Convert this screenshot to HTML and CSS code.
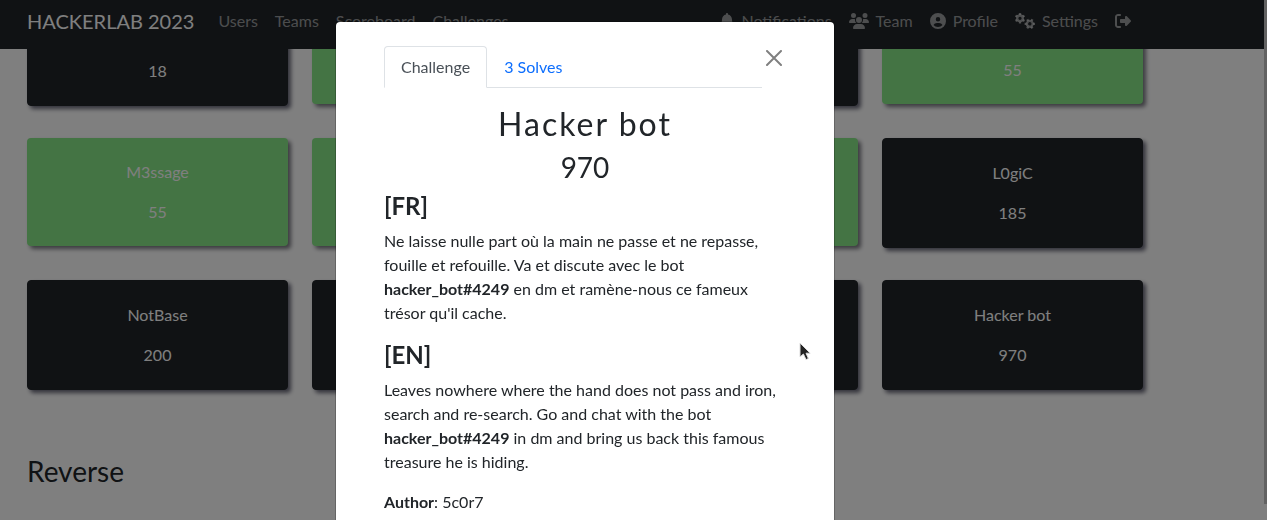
FILE: index.html
```html
<!DOCTYPE html>
<html lang="en">
<head>
<meta charset="utf-8">
<title>HACKERLAB 2023</title>
<link rel="stylesheet" href="styles.css">
</head>
<body>
<header class="navbar">
  <div class="container navbar-inner">
    <a class="brand" href="#">HACKERLAB 2023</a>
    <nav class="nav-links">
      <a href="#">Users</a>
      <a href="#">Teams</a>
      <a href="#">Scoreboard</a>
      <a href="#">Challenges</a>
    </nav>
    <nav class="nav-links nav-account">
      <a href="#"><svg class="icon" width="14" height="16" viewBox="0 0 448 512"><path d="M224 0c-17.7 0-32 14.3-32 32V51.2C119 66 64 130.6 64 208v18.8c0 47-17.3 92.4-48.5 127.6l-7.4 8.3c-8.4 9.4-10.4 22.9-5.3 34.4S19.4 416 32 416H416c12.6 0 24-7.4 29.2-18.9s3.1-25-5.3-34.4l-7.4-8.3C401.3 319.2 384 273.9 384 226.8V208c0-77.4-55-142-128-156.8V32c0-17.7-14.3-32-32-32zM160 448a64 64 0 0 0 128 0z"/></svg>Notifications</a>
      <a href="#"><svg class="icon" width="20" height="16" viewBox="0 0 640 512"><path d="M144 0a80 80 0 1 1 0 160A80 80 0 1 1 144 0zM512 0a80 80 0 1 1 0 160A80 80 0 1 1 512 0zM0 298.7C0 239.8 47.8 192 106.7 192h42.7c15.9 0 31 3.5 44.6 9.7c-1.3 7.2-1.9 14.7-1.9 22.3c0 38.2 16.8 72.5 43.3 96H21.3C9.6 320 0 310.4 0 298.7zM405.3 320c26.6-23.5 43.3-57.8 43.3-96c0-7.6-.7-15-1.9-22.3c13.6-6.3 28.7-9.7 44.6-9.7h42.7C592.2 192 640 239.8 640 298.7c0 11.8-9.6 21.3-21.3 21.3H405.3zM224 224a96 96 0 1 1 192 0 96 96 0 1 1 -192 0zM128 485.3C128 411.7 187.7 352 261.3 352H378.7C452.3 352 512 411.7 512 485.3c0 14.7-11.9 26.7-26.7 26.7H154.7c-14.7 0-26.7-11.9-26.7-26.7z"/></svg>Team</a>
      <a href="#"><svg class="icon" width="16" height="16" viewBox="0 0 512 512"><path fill-rule="evenodd" d="M399 384.2C376.9 345.8 335.4 320 288 320H224c-47.4 0-88.9 25.8-111 64.2c35.2 39.2 86.2 63.8 143 63.8s107.8-24.7 143-63.8zM0 256a256 256 0 1 1 512 0A256 256 0 1 1 0 256zm256 16a72 72 0 1 0 0-144 72 72 0 1 0 0 144z"/></svg>Profile</a>
      <a href="#"><svg class="icon" width="20" height="16" viewBox="0 0 20 16"><defs><g id="gear" fill="none" stroke="currentColor"><circle r="2.8" stroke-width="2.3"/><path stroke-width="2.3" d="M0-3.4V-5.2M0 3.4V5.2M2.9-1.7L4.5-2.6M-2.9 1.7L-4.5 2.6M2.9 1.7L4.5 2.6M-2.9-1.7L-4.5-2.6"/></g></defs><use href="#gear" x="5" y="5.3"/><use href="#gear" transform="translate(14.8 10.8) rotate(30)"/></svg>Settings</a>
      <a href="#" aria-label="Log out"><svg class="icon" width="16" height="16" viewBox="0 0 512 512"><path d="M377.9 105.9L500.7 228.7c7.2 7.2 11.3 17.1 11.3 27.3s-4.1 20.1-11.3 27.3L377.9 406.1c-6.4 6.4-15 9.9-24 9.9c-18.7 0-33.9-15.2-33.9-33.9l0-62.1-128 0c-17.7 0-32-14.3-32-32l0-64c0-17.7 14.3-32 32-32l128 0 0-62.1c0-18.7 15.2-33.9 33.9-33.9c9 0 17.6 3.6 24 9.9zM160 96L96 96c-17.7 0-32 14.3-32 32l0 256c0 17.7 14.3 32 32 32l64 0c17.7 0 32 14.3 32 32s-14.3 32-32 32l-64 0c-53 0-96-43-96-96L0 128C0 75 43 32 96 32l64 0c17.7 0 32 14.3 32 32s-14.3 32-32 32z"/></svg></a>
    </nav>
  </div>
</header>

<main class="container board">
  <div class="cards">
    <button class="card"><span>18</span></button>
    <button class="card solved"></button>
    <button class="card"></button>
    <button class="card solved"><span>55</span></button>

    <button class="card solved"><span>M3ssage</span><span>55</span></button>
    <button class="card solved"></button>
    <button class="card solved"></button>
    <button class="card"><span>L0giC</span><span>185</span></button>

    <button class="card"><span>NotBase</span><span>200</span></button>
    <button class="card"></button>
    <button class="card"></button>
    <button class="card"><span>Hacker bot</span><span>970</span></button>
  </div>
  <h3 class="category">Reverse</h3>
</main>
<div class="scroll-thumb"></div>

<div class="backdrop">
  <div class="modal" role="dialog" aria-modal="true" aria-labelledby="modal-title">
    <div class="modal-top">
      <div class="tabs" role="tablist">
        <button class="tab active" role="tab" aria-selected="true">Challenge</button>
        <button class="tab" role="tab" aria-selected="false">3 Solves</button>
      </div>
      <button class="close" aria-label="Close"><svg width="16" height="16" viewBox="0 0 16 16"><path d="M1 1L15 15M15 1L1 15" fill="none" stroke="currentColor" stroke-width="2" stroke-linecap="round"/></svg></button>
    </div>
    <h2 class="modal-title" id="modal-title">Hacker bot</h2>
    <h3 class="modal-value">970</h3>
    <div class="description">
      <h4>[FR]</h4>
      <p>Ne laisse nulle part où la main ne passe et ne repasse, fouille et refouille. Va et discute avec le bot <strong>hacker_bot#4249</strong> en dm et ramène-nous ce fameux trésor qu'il cache.</p>
      <h4>[EN]</h4>
      <p>Leaves nowhere where the hand does not pass and iron, search and re-search. Go and chat with the bot <strong>hacker_bot#4249</strong> in dm and bring us back this famous treasure he is hiding.</p>
      <p><strong>Author</strong>: 5c0r7</p>
    </div>
  </div>
</div>
<svg class="pointer" width="14" height="20" viewBox="0 0 14 20"><path d="M1 1V15L4.4 12L7 17.6L9.4 16.5L7 11.2H11.2Z" fill="#222" stroke="#ddd" stroke-width="1"/></svg>
</body>
</html>
```
FILE: styles.css
```css
* { box-sizing: border-box; }

html, body { height: 100%; }

body {
  margin: 0;
  overflow: hidden;
  background: #fff;
  color: #212529;
  font: 16px/24px Lato, "Liberation Sans", sans-serif;
}

h2, h3, h4, p { margin: 0; }
h2, h3 { font-weight: 400; }
a { color: inherit; text-decoration: none; }
button { font: inherit; color: inherit; cursor: pointer; }

.container {
  max-width: 1170px;
  padding: 0 27px;
}

.navbar {
  position: fixed;
  z-index: 1;
  inset: 0 3px auto 0;
  padding: 9px 0 16px;
  background: #212529;
}

.navbar-inner {
  display: flex;
  align-items: center;
  white-space: nowrap;
}

.brand {
  margin-right: 16px;
  color: #fff;
  font-size: 20px;
}

.nav-links {
  display: flex;
  gap: 1px;
  color: rgba(255, 255, 255, 0.55);
}

.nav-links a {
  display: flex;
  align-items: center;
  gap: 7px;
  padding: 0 8px;
}

.nav-account {
  margin-left: auto;
  margin-right: 4px;
}

.icon {
  flex: none;
  fill: currentColor;
}

.board { margin-top: -4px; }

.cards {
  display: grid;
  grid-template-columns: repeat(4, 1fr);
  grid-auto-rows: 110px;
  align-items: start;
  gap: 32px 24px;
}

.card {
  display: flex;
  flex-direction: column;
  justify-content: flex-end;
  align-items: center;
  gap: 16px;
  min-height: 110px;
  padding: 22px;
  border: 1px solid #212529;
  border-radius: 4px;
  background: #212529;
  color: #fff;
  box-shadow: 3px 3px 4px #686878;
}

.card.solved {
  min-height: 108px;
  border: 0;
  background: #88e888;
  box-shadow: 3px 3px 4px #787880;
}

.category {
  margin-top: 64px;
  font-size: 28px;
  line-height: 34px;
}

.scroll-thumb {
  position: fixed;
  inset: 0 0 16px auto;
  width: 3px;
  background: #c4c4c4;
}

.backdrop {
  position: fixed;
  z-index: 2;
  inset: 0;
  overflow: hidden;
  padding: 21px 97px 0 0;
  background: rgba(0, 0, 0, 0.5);
}

.modal {
  max-width: 500px;
  margin: 0 auto;
  padding: 24px 48px;
  border: 1px solid rgba(0, 0, 0, 0.2);
  border-radius: 5px;
  background: #fff;
  background-clip: padding-box;
}

.modal-top {
  display: flex;
  align-items: flex-start;
  gap: 4px;
  margin-bottom: 17px;
}

.tabs {
  display: flex;
  flex: 1;
  border-bottom: 1px solid #dee2e6;
}

.tab {
  margin-bottom: -1px;
  padding: 8px 16px;
  border: 1px solid transparent;
  border-radius: 4px 4px 0 0;
  background: none;
  color: #0d6efd;
}

.tab.active {
  border-color: #dee2e6 #dee2e6 #fff;
  background: #fff;
  color: #495057;
}

.close {
  display: flex;
  margin-top: 4px;
  padding: 0 4px 0 0;
  border: 0;
  background: none;
  color: #808080;
}

.modal-title {
  margin-bottom: 7px;
  font-size: 32px;
  line-height: 38px;
  letter-spacing: 2px;
  text-align: center;
}

.modal-value {
  margin-bottom: 8px;
  font-size: 28px;
  line-height: 34px;
  text-align: center;
}

.description h4 {
  margin-bottom: 10px;
  font-size: 24px;
  line-height: 27px;
  font-weight: 700;
}

.description p { margin-bottom: 16px; }

.pointer {
  position: absolute;
  z-index: 3;
  left: 799px;
  top: 342px;
}
```
